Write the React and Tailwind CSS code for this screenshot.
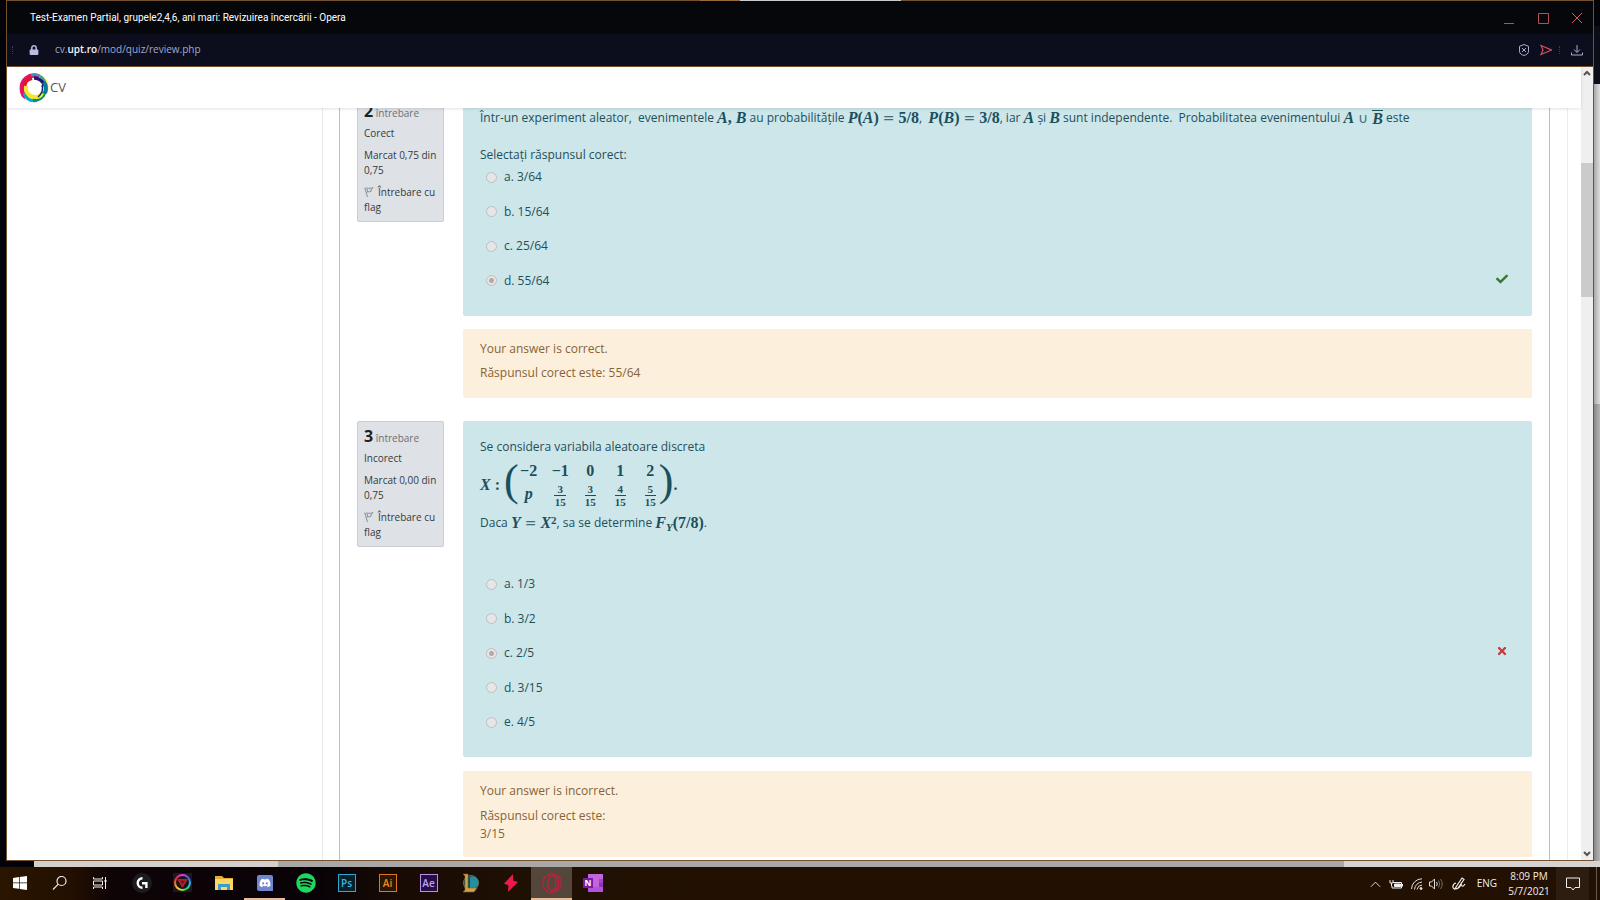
import React from "react";
import { FaCheck, FaTimes, FaLock, FaSpotify, FaDiscord } from "react-icons/fa";

function V({ children }) {
  return <i className="font-['Liberation_Serif',serif] text-base leading-none font-bold italic text-[#1c4f5c]">{children}</i>;
}
function N({ children }) {
  return <span className="font-['Liberation_Serif',serif] text-base leading-none font-bold text-[#1c4f5c]">{children}</span>;
}
function Op({ children }) {
  return <span className="mx-1 font-['DejaVu_Sans',sans-serif] text-sm leading-none text-[#3f6f79]">{children}</span>;
}
function Paren({ children }) {
  return <span className="pb-2 font-['Liberation_Serif',serif] text-[44px] leading-[40px] text-[#1c4f5c]">{children}</span>;
}
function Frac({ a, b }) {
  return (
    <span className="inline-flex flex-col items-center font-['Liberation_Serif',serif] text-[11px] leading-[11px] font-bold text-[#1c4f5c]">
      <span className="border-b border-[#1c4f5c] px-[3px]">{a}</span>
      <span className="pt-px">{b}</span>
    </span>
  );
}

function FlagIcon() {
  return (
    <svg viewBox="0 0 10 10" className="mr-1 inline-block size-[10px] align-[-1px]" fill="none" stroke="#8b9096" strokeWidth="1">
      <path d="M.8.800L3.500 10M1.200 1.500c2-1.200 3 .8 7.800-.9L6.800 3l.4 1.200C5 5.500 4.500 4 2.500 5.500M3 1.800L4 5" />
    </svg>
  );
}

function Info({ number, state, mark }) {
  return (
    <aside className="flex w-[87px] shrink-0 flex-col gap-[7px] self-start rounded-xs border border-[#cacdd2] bg-[#dee2e6] px-[6px] pt-[6px] pb-[6px] font-['Open_Sans','Noto_Sans',sans-serif] text-[10px] leading-[15px] text-[#343a40]">
      <h3 className="h-4 text-[10px] leading-4 font-normal whitespace-nowrap text-[#6a7076]">
        <b className="text-base leading-4 text-[#1d2125]">{number}</b> întrebare
      </h3>
      <div>{state}</div>
      <div>Marcat {mark} din<br />0,75</div>
      <a href="#flag" className="block"><FlagIcon />Întrebare cu<br />flag</a>
    </aside>
  );
}

function Choices({ name, items, checked, height, mark }) {
  return (
    <div className={"flex flex-col justify-between pl-[6px] " + height}>
      {items.map((t, i) => (
        <div key={t} className="flex h-[18px] items-center">
          <label className="flex items-center gap-[7px]">
            <input
              type="radio"
              name={name}
              defaultChecked={i === checked}
              className="size-[11px] appearance-none rounded-full border border-[#bfbfbf] bg-[#e7e6e7] checked:bg-[radial-gradient(circle,#b3a9aa_0_2px,#e9e4e4_3px)]"
            />
            {t}
          </label>
          {i === checked && <span className="mr-[7px] -mt-1 ml-auto">{mark}</span>}
        </div>
      ))}
    </div>
  );
}

function Feedback({ children, className }) {
  return <div className={"rounded-xs bg-[#fcefdc] px-[17px] pt-[11px] leading-[18px] text-[#866339] " + className}>{children}</div>;
}

function Matrix() {
  const top = ["−1", "0", "1", "2"];
  const low = ["3", "3", "4", "5"];
  return (
    <div className="flex h-[46px] items-center text-[#1c4f5c]">
      <V>X</V><N>&nbsp;:&nbsp;</N>
      <Paren>(</Paren>
      <table className="border-collapse text-center">
        <tbody>
          <tr className="h-[18px]">
            <td className="w-5 p-0"><N>−2</N></td>
            {top.map((t) => <td key={t} className="min-w-[30px] p-0 pl-[13px]"><N>{t}</N></td>)}
          </tr>
          <tr className="h-6">
            <td className="p-0"><V>p</V></td>
            {low.map((a, i) => <td key={i} className="p-0 pl-[13px]"><Frac a={a} b="15" /></td>)}
          </tr>
        </tbody>
      </table>
      <Paren>)</Paren>
      <N>.</N>
    </div>
  );
}

function Page() {
  return (
    <main className="min-h-0 flex-1 overflow-hidden bg-white">
      <div className="flex h-full">
        <div className="w-[316px] shrink-0 border-r border-[#e8e8e8]" />
        <div className="ml-4 h-full min-w-0 flex-1 border-x border-[#bdbdbd] px-[17px]">
          <section className="-mt-[12px] flex gap-[19px]">
            <Info number="2" state="Corect" mark="0,75" />
            <div className="min-w-0 flex-1">
              <form className="h-[220px] rounded-xs bg-[#cde6ea] px-[17px] pt-[13px]">
                <p className="flex h-[18px] items-center whitespace-pre">
                  <span>Într-un experiment aleator,  evenimentele </span><V>A</V><N>, </N><V>B</V>
                  <span> au probabilitățile </span><V>P</V><N>(</N><V>A</V><N>)</N><Op>=</Op><N>5/8</N>
                  <span>,  </span><V>P</V><N>(</N><V>B</V><N>)</N><Op>=</Op><N>3/8</N>
                  <span>, iar </span><V>A</V><span> și </span><V>B</V><span> sunt independente.  Probabilitatea evenimentului </span>
                  <V>A</V><Op>∪</Op><span className="border-t border-[#1c4f5c] leading-none"><V>B</V></span><span> este</span>
                </p>
                <p className="mt-5 h-[18px]">Selectați răspunsul corect:</p>
                <div className="pt-[3px]"><Choices name="q2" items={["a. 3/64", "b. 15/64", "c. 25/64", "d. 55/64"]} checked={3} height="h-[122px]" mark={<FaCheck className="size-3 text-[#357a32]" />} /></div>
              </form>
              <Feedback className="mt-[13px] h-[69px]">
                <p>Your answer is correct.</p>
                <p className="mt-[6px]">Răspunsul corect este: 55/64</p>
              </Feedback>
            </div>
          </section>
          <section className="mt-[23px] flex gap-[19px]">
            <Info number="3" state="Incorect" mark="0,00" />
            <div className="min-w-0 flex-1">
              <form className="h-[336px] rounded-xs bg-[#cde6ea] px-[17px] pt-[18px]">
                <p className="h-[18px]">Se considera variabila aleatoare discreta</p>
                <div className="pt-[5px]"><Matrix /></div>
                <p className="mt-[5px] flex h-[20px] items-center whitespace-pre">
                  <span>Daca </span><V>Y</V><Op>=</Op><V>X</V><sup className="-top-1 text-[11px]"><N><span className="text-[11px]">2</span></N></sup>
                  <span>, sa se determine </span><V>F</V><sub className="text-[11px]"><V><span className="text-[11px]">Y</span></V></sub><N>(7/8)</N><span>.</span>
                </p>
                <div className="pt-[42px]"><Choices name="q3" items={["a. 1/3", "b. 3/2", "c. 2/5", "d. 3/15", "e. 4/5"]} checked={2} height="h-[156px]" mark={<FaTimes className="size-3 text-[#c93a3a]" />} /></div>
              </form>
              <Feedback className="mt-[14px] h-[86px]">
                <p>Your answer is incorrect.</p>
                <p className="mt-[7px]">Răspunsul corect este:<br />3/15</p>
              </Feedback>
            </div>
          </section>
        </div>
        <div className="ml-[17px] w-[14px] shrink-0 border-l border-[#ececec]" />
      </div>
    </main>
  );
}

function Chevron({ down }) {
  return (
    <svg viewBox="0 0 8 6" className="h-[6px] w-2" fill="none" stroke="#555" strokeWidth="2">
      <path d={down ? "M1 1l3 3 3-3" : "M1 5l3-3 3 3"} />
    </svg>
  );
}

function LogoRing() {
  return (
    <svg viewBox="0 0 30 30" className="size-[30px]" fill="none">
      <circle cx="16" cy="14" r="12" stroke="#f7ee3a" strokeWidth="3" />
      <path d="M20 3.500C10 0 2 7 3 17c.3 3 2 6 4 7" stroke="#e5106d" strokeWidth="4.500" />
      <path d="M12 2.500c6-2 12 1 14 6" stroke="#2a9fc0" strokeWidth="2" />
      <path d="M15 5a10.500 10.500 0 0 1 10.500 8" stroke="#1c1b6d" strokeWidth="3.500" />
      <path d="M5 20c2 6 7 8.500 13 7.500" stroke="#10a6ce" strokeWidth="3" />
      <path d="M14 27c6 0 10-3 11.500-8" stroke="#0a8b69" strokeWidth="4" />
      <path d="M26 20c1.500-4 1-8-1-11" stroke="#0879a2" strokeWidth="4" />
      <path d="M13 5C8 6 5 10 5.500 15" stroke="#e3152c" strokeWidth="4" />
      <path d="M7 13c-1 6 3 11 10 11 3 0 5-1 6-4" stroke="#f4e82a" strokeWidth="4" />
      <path d="M23 12c1.500 4 0 9-4 12" stroke="#152672" strokeWidth="1.500" />
    </svg>
  );
}

function Task({ label, active, under, w = "w-[41px]", children }) {
  return (
    <button aria-label={label} className={"flex h-full items-center justify-center border-b-2 " + w + (active ? " bg-[#54463a]" : "") + (under ? " border-[#eab995]" : " border-transparent")}>
      {children}
    </button>
  );
}

function Adobe({ children, look }) {
  return <span className={"flex size-[18px] items-center justify-center border font-['Open_Sans',sans-serif] text-[10px] leading-none font-semibold " + look}>{children}</span>;
}

function Taskbar() {
  return (
    <footer className="flex h-[33px] shrink-0 items-center bg-[linear-gradient(90deg,#2a1500_0,#241000_70px,#0e0406_110px,#080207_320px,#180b04_400px,#1f1004_520px,#221102_700px,#221102_100%)] text-[#f2eeea]">
      <Task label="Start" w="w-10">
        <svg viewBox="0 0 14 14" className="size-[14px]" fill="#fff"><path d="M0 2l6-.9v5.500H0zM6.700 1L14 0v6.600H6.700zM0 7.300h6v5.500L0 12zM6.700 7.300H14V14l-7.300-1z" /></svg>
      </Task>
      <Task label="Căutare" w="w-[39px]">
        <svg viewBox="0 0 16 16" className="size-4" fill="none" stroke="#eee" strokeWidth="1.200"><circle cx="9.500" cy="6" r="4.500" /><path d="M6.300 9.200L1 14.500" /></svg>
      </Task>
      <Task label="Task view" w="w-[42px]">
        <svg viewBox="0 0 14 14" className="size-[14px]" fill="none" stroke="#eee"><path d="M.5 1v2h9V1M.5 13v-2h9v2M.5 5h9v4h-9zM12.500 1v12" /><path d="M11.500 5h2" strokeWidth="2" /></svg>
      </Task>
      <Task label="Logitech G">
        <svg viewBox="0 0 20 20" className="size-5"><circle cx="10" cy="10" r="10" fill="#1c1c1e" /><path d="M10.500 5.200a4.800 4.800 0 1 0 0 9.600" fill="none" stroke="#fff" strokeWidth="2.400" /><path d="M10 9h5.600v6h-2.400v-3.600H10z" fill="#fff" /></svg>
      </Task>
      <Task label="Aura">
        <span className="flex size-[19px] items-center justify-center bg-[#1b1820]">
          <span className="flex size-[17px] items-center justify-center rounded-full bg-[conic-gradient(#e13bd6,#4f55f1,#1bc8ee,#27d84a,#e9e42d,#f4791f,#ee2058,#e13bd6)]">
            <svg viewBox="0 0 14 14" className="size-[13px]"><circle cx="7" cy="7" r="7" fill="#1a1119" /><path d="M1.800 3.800h10.400L7 12.200z" fill="#a81d28" stroke="#d84b4b" strokeWidth=".5" /><path d="M5 5.500h4L7 9z" fill="#681219" /></svg>
          </span>
        </span>
      </Task>
      <Task label="Explorer">
        <svg viewBox="0 0 18 16" className="h-4 w-[18px]"><path d="M0 1h7l2 2h9v12H0z" fill="#e8ad2e" /><path d="M0 4h18v11H0z" fill="#fbd766" /><path d="M3 9h12v6h-3v-3H6v3H3z" fill="#3f9cc9" /></svg>
      </Task>
      <Task label="Discord" under>
        <span className="flex size-4 items-center justify-center rounded-xs rounded-br-none bg-[#7086cf]"><FaDiscord className="size-3 text-white" /></span>
      </Task>
      <Task label="Spotify"><FaSpotify className="size-5 text-[#1ed760]" /></Task>
      <Task label="Photoshop"><Adobe look="border-[#2ea8d0] bg-[#06202d] text-[#35b9e6]">Ps</Adobe></Task>
      <Task label="Illustrator"><Adobe look="border-[#dd7717] bg-[#2b1503] text-[#f08a20]">Ai</Adobe></Task>
      <Task label="After Effects"><Adobe look="border-[#b494e0] bg-[#260c4a] text-[#bfa2ee]">Ae</Adobe></Task>
      <Task label="League">
        <svg viewBox="0 0 18 20" className="h-5 w-[18px]"><circle cx="10" cy="10" r="7.500" fill="#0e4b5b" stroke="#7b6a43" /><path d="M9 4a6 6 0 0 1 5 11H9z" fill="#238f9e" /><path d="M2 1h5v14h9l-3 4H2l2-2V3z" fill="#cda349" stroke="#80602a" strokeWidth=".6" /></svg>
      </Task>
      <Task label="Bolt">
        <svg viewBox="0 0 16 20" className="h-5 w-4" fill="#f0184a"><path d="M10 1L1 10.500l4.500 2L5 19l10-10-5-1.500z" /></svg>
      </Task>
      <Task label="Opera" active under>
        <svg viewBox="0 0 20 20" className="size-5" fill="none" stroke="#c61e3e" strokeWidth="1.200"><circle cx="10" cy="10" r="9.300" /><ellipse cx="10" cy="10" rx="4.200" ry="7.500" /><path d="M10 2.500c9 0 9 15 0 15" /></svg>
      </Task>
      <Task label="OneNote">
        <svg viewBox="0 0 20 18" className="h-[18px] w-5"><path d="M5 0h15v18H5z" fill="#c464dd" /><path d="M16 5h4v4h-4z" fill="#a742cf" /><path d="M16 9h4v4h-4z" fill="#9032bb" /><path d="M5 13h15v5H5z" fill="#b453d8" /><path d="M0 4h10v10H0z" fill="#7719aa" /><text x="5" y="12" textAnchor="middle" fontSize="8.500" fontWeight="700" fill="#fff" fontFamily="Open Sans">N</text></svg>
      </Task>
      <div className="ml-auto flex h-full items-center font-['Open_Sans','Noto_Sans',sans-serif] text-[10px]">
        <svg viewBox="0 0 12 8" className="h-2 w-[11px]" fill="none" stroke="#eee"><path d="M1 7l5-5 5 5" /></svg>
        <svg viewBox="0 0 14 10" className="ml-2 h-[10px] w-[14px]" fill="none" stroke="#eee"><path d="M4 3.500h8.500v5.500H3V7M13.500 5v2.500M1 1v3h3V1M2.500 4v3" /><path d="M5.500 5h6v2.500h-6z" fill="#eee" /></svg>
        <svg viewBox="0 0 12 12" className="ml-2 size-3" fill="none" stroke="#ddd"><path d="M.5 11A10.500 10.500 0 0 1 11 .8M3.500 11.500A8 8 0 0 1 11 4M6 11.500A5.500 5.500 0 0 1 11 7" /><circle cx="10" cy="10.500" r="1" fill="#eee" /></svg>
        <svg viewBox="0 0 14 12" className="ml-[6px] h-3 w-[14px]" fill="none" stroke="#ddd"><path d="M.5 4h2l3-3v10l-3-3h-2zM7.500 4q1.500 2 0 4" /><path d="M9.500 2.500q2.500 3.500 0 7M11.500 1q3.500 5 0 10" stroke="#776b62" /></svg>
        <svg viewBox="0 0 14 14" className="ml-[9px] size-[14px]" fill="none" stroke="#eee" strokeWidth="1.200"><path d="M4 10L10 1l2 1.500L6 11l-3 1zM4 6c-4 1-4 6-1 6s5-2 6-5c1 3 2 3 4 0" /></svg>
        <span className="ml-[11px]">ENG</span>
        <span className="ml-[10px] w-11 text-center leading-[15px] whitespace-nowrap">8:09 PM<br />5/7/2021</span>
        <button aria-label="Notificări" className="ml-[5px] flex h-full w-[33px] items-center justify-center bg-[#2d1d11]">
          <svg viewBox="0 0 14 14" className="size-[14px]" fill="none" stroke="#eee"><path d="M.5 1h13v9.500H9L7 13l-2-2.500H.5z" /></svg>
        </button>
        <span className="mr-[3px] ml-[7px] h-full border-l border-[#66584c]" />
      </div>
    </footer>
  );
}

export default function App() {
  return (
    <div className="flex h-screen flex-col overflow-hidden bg-[#05060a] font-['Open_Sans','Noto_Sans',sans-serif] text-xs text-[#1f4f59]">
      <div className="flex min-h-0 flex-1">
        <div className="w-[6px] shrink-0 bg-[#030409]" />
        <div className="flex min-w-0 flex-1 flex-col border border-t-0 border-[#73502f] bg-white">
          <div className="flex h-px shrink-0 bg-[#73502f]">
            <div className="flex-[693]" />
            <div className="flex-[40] bg-[#9a6a3c]" />
            <div className="flex-[161] bg-[#c5cdd0]" />
            <div className="flex-[692]" />
          </div>
          <header className="flex h-[33px] shrink-0 items-center bg-[#06070b] pl-[23px] font-[Roboto,'Open_Sans',sans-serif] text-[10px] text-white">
            <h1>Test-Examen Partial, grupele2,4,6, ani mari: Revizuirea încercării - Opera</h1>
            <div className="mr-[10px] ml-auto flex items-center gap-[22px]">
              <button aria-label="Minimizează"><svg viewBox="0 0 12 12" className="size-3" stroke="#bb4d57"><path d="M1 11.500h10" /></svg></button>
              <button aria-label="Maximizează"><svg viewBox="0 0 12 12" className="size-3" fill="none" stroke="#bb4d57"><path d="M1.500 1.500h10v10h-10z" /></svg></button>
              <button aria-label="Închide"><svg viewBox="0 0 12 12" className="size-3" stroke="#d85863"><path d="M1 1l10 10M11 1L1 11" /></svg></button>
            </div>
          </header>
          <nav className="flex h-[33px] shrink-0 items-center border-b border-[#73502f] bg-[#0c0e1d] text-[10px] text-[#a5a7cc]">
            <span className="ml-[5px] h-2 border-l border-dotted border-[#3a3c50]" />
            <FaLock className="ml-[16px] size-[10px] text-[#b9bbe4]" />
            <span className="ml-[16px]">cv.<span className="font-semibold text-[#f4f4fb]">upt.ro</span>/mod/quiz/review.php</span>
            <div className="mr-[10px] ml-auto flex items-center">
              <button aria-label="Blocare reclame"><svg viewBox="0 0 12 12" className="size-3" fill="none" stroke="#a9abcf"><path d="M6 .5l4.500 1.800v5.400C10.500 9.500 8 11 6 11.500 4 11 1.500 9.500 1.500 7.700V2.300zM4 4l4 4M8 4L4 8" /></svg></button>
              <button aria-label="My Flow" className="ml-[10px]"><svg viewBox="0 0 12 12" className="size-3" fill="none" stroke="#d1515f" strokeWidth="1.200"><path d="M1 1.500L11.500 6 1 10.500 3 6z" /></svg></button>
              <span className="ml-[7px] h-2 border-l border-dotted border-[#3a3c50]" />
              <button aria-label="Descărcări" className="ml-[11px]"><svg viewBox="0 0 12 12" className="size-3" fill="none" stroke="#a9abcf"><path d="M6 1v7M3 5.500l3 3 3-3M.5 8.500v2.500h11V8.500" /></svg></button>
            </div>
          </nav>
          <div className="flex min-h-0 flex-1">
            <div className="flex min-w-0 flex-1 flex-col">
              <div className="z-10 flex h-[41px] shrink-0 items-center bg-white pl-3 shadow-[0_1px_3px_rgba(0,0,0,0.12)]">
                <a href="#home" className="flex items-center gap-px text-[13px] text-[#555]"><LogoRing />CV</a>
              </div>
              <Page />
            </div>
            <div className="flex w-3 shrink-0 flex-col items-center bg-[#efefef] py-[3px]">
              <Chevron />
              <div className="mt-[87px] h-[134px] w-full bg-[#cbcbcb]" />
              <div className="mt-auto"><Chevron down /></div>
            </div>
          </div>
        </div>
        <div className="flex w-[6px] shrink-0 flex-col">
          <div className="h-[26px] bg-[#030409]" />
          <div className="h-[58px] bg-[#0b0d19]" />
          <div className="h-[320px] bg-[linear-gradient(90deg,#a8a8a8,#dedede)]" />
          <div className="flex-1 bg-[linear-gradient(90deg,#888,#b5b5b5)]" />
        </div>
      </div>
      <div className="flex h-[6px] shrink-0">
        <div className="w-[34px] bg-[#030409]" />
        <div className="w-[244px] bg-[#d2cfcd]" />
        <div className="flex-[1066] bg-[#aaa8a7]" />
        <div className="flex-[256] bg-[#d6d4d2]" />
      </div>
      <Taskbar />
    </div>
  );
}
